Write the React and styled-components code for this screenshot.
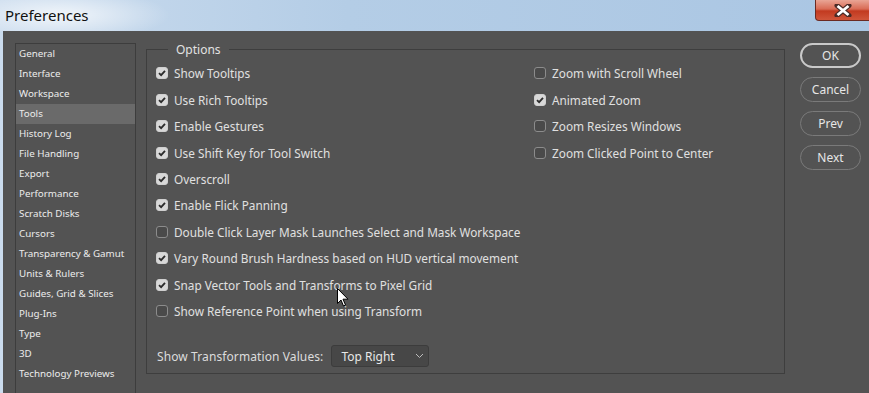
import { createGlobalStyle } from 'styled-components'
import styled from 'styled-components'

const Global = createGlobalStyle`
  html, body { margin: 0; padding: 0; }
  body { width: 869px; height: 393px; overflow: hidden; }
`

const Window = styled.div`
  width: 869px;
  height: 393px;
  display: flex;
  flex-direction: column;
  background: linear-gradient(90deg, #cbdcee 0%, #b4cde6 40%, #aac6e3 100%);
  position: relative;
  overflow: hidden;
  font-family: "Noto Sans", "Liberation Sans", sans-serif;
`

const TitleBar = styled.div`
  height: 31px;
  flex: none;
  display: flex;
  align-items: flex-start;
  justify-content: space-between;
  background:
    radial-gradient(ellipse 110px 26px at 60px 15px, rgba(255,255,255,0.75), rgba(255,255,255,0) 100%);
`

const Title = styled.div`
  padding: 5px 0 0 5px;
  font-family: "Noto Sans", sans-serif;
  font-size: 15px;
  color: #111;
`

const CloseBtn = styled.div`
  width: 54px;
  height: 20px;
  margin-right: -2px;
  border: 1px solid #6b2a22;
  border-top: none;
  border-radius: 0 0 0 4px;
  background: linear-gradient(180deg, #e9a595 0%, #d96b55 45%, #c23a20 55%, #d0553a 100%);
  display: flex;
  align-items: center;
  justify-content: center;
`

const Body = styled.div`
  flex: 1;
  margin-left: 3px;
  background: #535353;
  display: flex;
  align-items: flex-start;
  padding: 12px 0 0 12px;
`

const List = styled.div`
  width: 121px;
  height: 360px;
  flex: none;
  border: 1px solid #3d3d3d;
  box-sizing: border-box;
  font-family: "Noto Sans", sans-serif;
  font-size: 9.8px;
  color: #ececec;
`

const ListItem = styled.div`
  height: 20px;
  line-height: 19px;
  padding-left: 3px;
  background: ${p => (p.$active ? '#6a6a6a' : 'transparent')};
`

const Group = styled.fieldset`
  margin: -2px 0 0 10px;
  padding: 2px 0 0 9px;
  width: 639px;
  height: 333px;
  box-sizing: border-box;
  border: 1px solid #3e3e3e;
  display: flex;
  flex-direction: column;
`

const Legend = styled.legend`
  margin-left: 12px;
  padding: 0 8px;
  font-size: 12px;
  color: #e2e2e2;
`

const Columns = styled.div`
  display: grid;
  grid-template-columns: 378px 1fr;
`

const Column = styled.div`
  display: flex;
  flex-direction: column;
`

const Row = styled.label`
  height: 26.45px;
  display: flex;
  align-items: center;
  gap: 6px;
  font-size: 11.8px;
  color: #e0e0e0;
  white-space: nowrap;
`

const Box = styled.span`
  width: 12px;
  height: 12px;
  box-sizing: border-box;
  border-radius: 3px;
  flex: none;
  display: flex;
  align-items: center;
  justify-content: center;
  background: ${p => (p.$on ? '#d8d8d8' : '#4a4a4a')};
  border: 1px solid ${p => (p.$on ? '#cfcfcf' : '#8c8c8c')};
`

const SelectRow = styled.div`
  margin: 21px 0 0 1px;
  display: flex;
  align-items: center;
  gap: 8px;
  font-size: 12px;
  letter-spacing: 0.1px;
  color: #dcdcdc;
`

const Select = styled.div`
  width: 98px;
  height: 22px;
  flex: none;
  box-sizing: border-box;
  border: 1px solid #3c3c3c;
  border-radius: 3px;
  background: #474747;
  display: flex;
  align-items: center;
  justify-content: space-between;
  padding: 0 4px 0 9px;
  color: #e8e8e8;
  letter-spacing: 0;
`

const Buttons = styled.div`
  margin: 0 0 0 15px;
  display: flex;
  flex-direction: column;
  gap: 9px;
`

const Button = styled.div`
  width: 61px;
  height: 25px;
  box-sizing: border-box;
  border-radius: 13px;
  border: ${p => (p.$primary ? '2px solid #c9c9c9' : '1px solid #7a7a7a')};
  display: flex;
  align-items: center;
  justify-content: center;
  font-size: 12px;
  color: #e6e6e6;
`

const Cursor = styled.svg`
  position: absolute;
  left: 337px;
  top: 288px;
`

const sections = [
  'General', 'Interface', 'Workspace', 'Tools', 'History Log', 'File Handling',
  'Export', 'Performance', 'Scratch Disks', 'Cursors', 'Transparency & Gamut',
  'Units & Rulers', 'Guides, Grid & Slices', 'Plug-Ins', 'Type', '3D',
  'Technology Previews',
]

const leftOpts = [
  ['Show Tooltips', true],
  ['Use Rich Tooltips', true],
  ['Enable Gestures', true],
  ['Use Shift Key for Tool Switch', true],
  ['Overscroll', true],
  ['Enable Flick Panning', true],
  ['Double Click Layer Mask Launches Select and Mask Workspace', false],
  ['Vary Round Brush Hardness based on HUD vertical movement', true],
  ['Snap Vector Tools and Transforms to Pixel Grid', true],
  ['Show Reference Point when using Transform', false],
]

const rightOpts = [
  ['Zoom with Scroll Wheel', false],
  ['Animated Zoom', true],
  ['Zoom Resizes Windows', false],
  ['Zoom Clicked Point to Center', false],
]

function Check({ on }) {
  return (
    <Box $on={on}>
      {on && (
        <svg width="8" height="8" viewBox="0 0 8 8">
          <path d="M1 4.2 L3.1 6.2 L7 1.8" fill="none" stroke="#2b2b2b" strokeWidth="1.8" />
        </svg>
      )}
    </Box>
  )
}

function Option({ text, on }) {
  return (
    <Row>
      <Check on={on} />
      {text}
    </Row>
  )
}

export default function App() {
  return (
    <Window>
      <Global />
      <TitleBar>
        <Title>Preferences</Title>
        <CloseBtn>
          <svg width="18" height="13" viewBox="0 0 18 13">
            <path d="M3 1.5 L15 11.5 M15 1.5 L3 11.5" stroke="#4a2a26" strokeWidth="5" strokeLinecap="round" />
            <path d="M3.5 2 L14.5 11 M14.5 2 L3.5 11" stroke="#ffffff" strokeWidth="2.8" />
          </svg>
        </CloseBtn>
      </TitleBar>
      <Body>
        <List>
          {sections.map(s => (
            <ListItem key={s} $active={s === 'Tools'}>{s}</ListItem>
          ))}
        </List>
        <Group>
          <Legend>Options</Legend>
          <Columns>
            <Column>
              {leftOpts.map(([t, on]) => <Option key={t} text={t} on={on} />)}
            </Column>
            <Column>
              {rightOpts.map(([t, on]) => <Option key={t} text={t} on={on} />)}
            </Column>
          </Columns>
          <SelectRow>
            Show Transformation Values:
            <Select>
              Top Right
              <svg width="9" height="6" viewBox="0 0 9 6">
                <path d="M1 1 L4.5 4.5 L8 1" fill="none" stroke="#bdbdbd" strokeWidth="1" />
              </svg>
            </Select>
          </SelectRow>
        </Group>
        <Buttons>
          <Button $primary>OK</Button>
          <Button>Cancel</Button>
          <Button>Prev</Button>
          <Button>Next</Button>
        </Buttons>
      </Body>
      <Cursor width="12" height="19" viewBox="0 0 12 19">
        <path d="M0.5 0.5 L0.5 15.5 L4 12 L6.5 18 L8.5 17 L6 11.2 L11 11.2 Z" fill="#fff" stroke="#000" strokeWidth="1" />
      </Cursor>
    </Window>
  )
}
